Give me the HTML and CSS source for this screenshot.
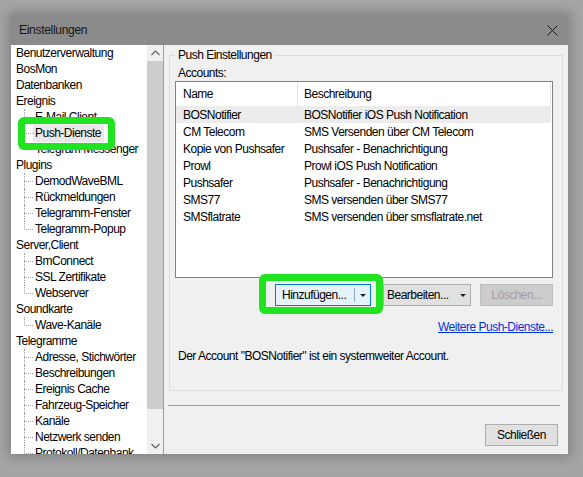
FILE: index.html
```html
<!DOCTYPE html>
<html lang="de">
<head>
<meta charset="utf-8">
<title>Einstellungen</title>
<link rel="stylesheet" href="styles.css">
</head>
<body>
<div class="screen">
  <div class="dialog">
    <div class="titlebar">
      <span class="title">Einstellungen</span>
      <svg class="close" width="11" height="11" viewBox="0 0 11 11"><path d="M0.5 0.5 L10.5 10.5 M10.5 0.5 L0.5 10.5" stroke="#1a1a1a" stroke-width="1" fill="none"/></svg>
    </div>
    <div class="content">
      <div class="tree">
        <div class="tree-list">
          <div class="node">Benutzerverwaltung</div>
          <div class="node">BosMon</div>
          <div class="node">Datenbanken</div>
          <div class="node">Ereignis</div>
          <div class="children">
            <div class="child">E-Mail Client</div>
            <div class="child selected"><span class="label">Push-Dienste</span></div>
            <div class="child">Telegram Messenger</div>
          </div>
          <div class="node">Plugins</div>
          <div class="children">
            <div class="child">DemodWaveBML</div>
            <div class="child">Rückmeldungen</div>
            <div class="child">Telegramm-Fenster</div>
            <div class="child">Telegramm-Popup</div>
          </div>
          <div class="node">Server,Client</div>
          <div class="children">
            <div class="child">BmConnect</div>
            <div class="child">SSL Zertifikate</div>
            <div class="child">Webserver</div>
          </div>
          <div class="node">Soundkarte</div>
          <div class="children">
            <div class="child">Wave-Kanäle</div>
          </div>
          <div class="node">Telegramme</div>
          <div class="children">
            <div class="child">Adresse, Stichwörter</div>
            <div class="child">Beschreibungen</div>
            <div class="child">Ereignis Cache</div>
            <div class="child">Fahrzeug-Speicher</div>
            <div class="child">Kanäle</div>
            <div class="child">Netzwerk senden</div>
            <div class="child">Protokoll/Datenbank</div>
          </div>
        </div>
        <div class="scrollbar">
          <div class="sb-arrow"><svg width="9" height="6" viewBox="0 0 9 6"><path d="M0.5 5 L4.5 1 L8.5 5" stroke="#606060" stroke-width="1.2" fill="none"/></svg></div>
          <div class="sb-thumb"></div>
          <div class="sb-track"></div>
          <div class="sb-arrow"><svg width="9" height="6" viewBox="0 0 9 6"><path d="M0.5 1 L4.5 5 L8.5 1" stroke="#606060" stroke-width="1.2" fill="none"/></svg></div>
        </div>
      </div>
      <div class="main">
        <fieldset class="group">
          <legend class="legend">Push Einstellungen</legend>
          <div class="accounts">Accounts:</div>
          <div class="listview">
            <div class="lv-head">
              <div class="h1">Name</div>
              <div class="h2">Beschreibung</div>
            </div>
            <div class="lv-row sel"><div class="c1">BOSNotifier</div><div class="c2">BOSNotifier iOS Push Notification</div></div>
            <div class="lv-row"><div class="c1">CM Telecom</div><div class="c2">SMS Versenden über CM Telecom</div></div>
            <div class="lv-row"><div class="c1">Kopie von Pushsafer</div><div class="c2">Pushsafer - Benachrichtigung</div></div>
            <div class="lv-row"><div class="c1">Prowl</div><div class="c2">Prowl iOS Push Notification</div></div>
            <div class="lv-row"><div class="c1">Pushsafer</div><div class="c2">Pushsafer - Benachrichtigung</div></div>
            <div class="lv-row"><div class="c1">SMS77</div><div class="c2">SMS versenden über SMS77</div></div>
            <div class="lv-row"><div class="c1">SMSflatrate</div><div class="c2">SMS versenden über smsflatrate.net</div></div>
          </div>
          <div class="buttons">
            <div class="btn btn-split">
              <span class="btn-text">Hinzufügen...</span>
              <span class="divider"></span>
              <span class="drop"><span class="tri"></span></span>
            </div>
            <div class="btn btn-drop">
              <span class="btn-text">Bearbeiten...</span>
              <span class="tri"></span>
            </div>
            <div class="btn btn-disabled">Löschen...</div>
          </div>
          <div class="linkrow"><span class="link">Weitere Push-Dienste...</span></div>
          <div class="info">Der Account "BOSNotifier" ist ein systemweiter Account.</div>
        </fieldset>
        <div class="separator"></div>
        <div class="footer">
          <div class="btn btn-close">Schließen</div>
        </div>
      </div>
    </div>
    <div class="mark mark-tree"></div>
    <div class="mark mark-btn"></div>
  </div>
</div>
</body>
</html>
```
FILE: styles.css
```css
* { box-sizing: border-box; }

html, body {
  margin: 0;
  width: 583px;
  height: 477px;
  overflow: hidden;
}

body {
  background: #a5a5a5;
  font-family: "Liberation Sans", Arial, sans-serif;
  font-size: 12px;
  letter-spacing: -0.5px;
  color: #000;
}

.screen {
  padding: 15px 0 0 11px;
}

.dialog {
  position: relative;
  width: 557px;
  height: 439px;
  background: #f0f0f0;
  box-shadow: 0 0 12px 3px rgba(0, 0, 0, 0.22);
  display: flex;
  flex-direction: column;
}

.titlebar {
  height: 30px;
  background: #8b8b8b;
  display: flex;
  align-items: center;
  justify-content: space-between;
  padding: 0 10px 0 8px;
}

.title {
  color: #141414;
  letter-spacing: -0.3px;
}

.close { display: block; }

.content {
  flex: 1;
  display: flex;
  min-height: 0;
}

/* tree */
.tree {
  width: 153px;
  display: flex;
  background: #fff;
  border-right: 1px solid #9c9c9c;
}

.tree-list {
  width: 136px;
  overflow: hidden;
  line-height: 16px;
  white-space: nowrap;
}

.node {
  height: 16px;
  padding-left: 5px;
}

.child {
  position: relative;
  height: 16px;
  padding-left: 24px;
}

.child::before {
  content: "";
  position: absolute;
  left: 13px;
  top: 8px;
  width: 9px;
  border-top: 1px dotted #a0a0a0;
}

.child::after {
  content: "";
  position: absolute;
  left: 13px;
  top: 0;
  height: 16px;
  border-left: 1px dotted #a0a0a0;
}

.child:last-child::after { height: 9px; }

.selected .label {
  display: inline-block;
  background: #e8e8e8;
  padding: 0 3px 1px 2px;
  margin-left: -2px;
}

.scrollbar {
  width: 16px;
  background: #f0f0f0;
  display: flex;
  flex-direction: column;
}

.sb-arrow {
  height: 16px;
  display: flex;
  align-items: center;
  justify-content: center;
}

.sb-arrow svg { display: block; }

.sb-thumb {
  height: 348px;
  background: #cdcdcd;
}

.sb-track { flex: 1; }

/* main */
.main {
  flex: 1;
  display: flex;
  flex-direction: column;
}

.group {
  margin: 2px 5px 0 5px;
  height: 344px;
  border: 1px solid #dcdcdc;
  padding: 2px 9px 0 5px;
  min-width: 0;
}

.legend {
  padding: 0 2px 0 3px;
  line-height: 16px;
}

.accounts {
  line-height: 16px;
  padding-left: 3px;
}

.listview {
  height: 197px;
  background: #fff;
  border: 1px solid #828282;
}

.lv-head {
  display: flex;
  height: 24px;
}

.h1, .h2 {
  display: flex;
  align-items: center;
  border-right: 1px solid #e5e5e5;
}

.h1 { width: 122px; padding-left: 7px; }
.h2 { width: 253px; padding-left: 6px; }

.lv-row {
  display: flex;
  align-items: center;
  height: 17px;
  width: 375px;
  white-space: nowrap;
}

.lv-row.sel { background: #ececec; }

.c1 { width: 122px; padding-left: 7px; }
.c2 { padding-left: 6px; }

.buttons {
  display: flex;
  justify-content: flex-end;
  margin-top: 6px;
  height: 22px;
}

.btn {
  height: 22px;
  display: flex;
  align-items: center;
  background: #e1e1e1;
  border: 1px solid #adadad;
  white-space: nowrap;
}

.btn-split {
  width: 96px;
  background: #e5f1fb;
  border-color: #0078d7;
}

.btn-split .btn-text {
  flex: 1;
  padding-left: 6px;
}

.divider {
  width: 1px;
  height: 14px;
  background: #8fa8c4;
}

.drop {
  width: 15px;
  display: flex;
  justify-content: center;
}

.tri {
  width: 0;
  height: 0;
  border-left: 3px solid transparent;
  border-right: 3px solid transparent;
  border-top: 3px solid #222;
}

.btn-drop {
  width: 88px;
  margin-left: 12px;
  justify-content: space-between;
  padding: 0 4px 0 3px;
}

.btn-disabled {
  width: 73px;
  margin-left: 9px;
  justify-content: center;
  background: #cccccc;
  border-color: #bfbfbf;
  color: #a0a0a0;
}

.linkrow {
  margin-top: 13px;
  line-height: 16px;
  text-align: right;
}

.link {
  color: #0033dd;
  text-decoration: underline;
}

.info {
  margin-top: 13px;
  line-height: 16px;
  padding-left: 3px;
}

.separator {
  height: 1px;
  background: #a0a0a0;
  margin: 14px 8px 0 4px;
}

.footer {
  display: flex;
  justify-content: flex-end;
  margin-top: 18px;
  padding-right: 10px;
}

.btn-close {
  width: 73px;
  justify-content: center;
}

/* annotation overlays */
.mark {
  position: absolute;
  border: 7px solid #1fe41f;
  border-radius: 6px;
}

.mark-tree {
  left: 7px;
  top: 102px;
  width: 97px;
  height: 33px;
}

.mark-btn {
  left: 248px;
  top: 259px;
  width: 124px;
  height: 40px;
}
```
